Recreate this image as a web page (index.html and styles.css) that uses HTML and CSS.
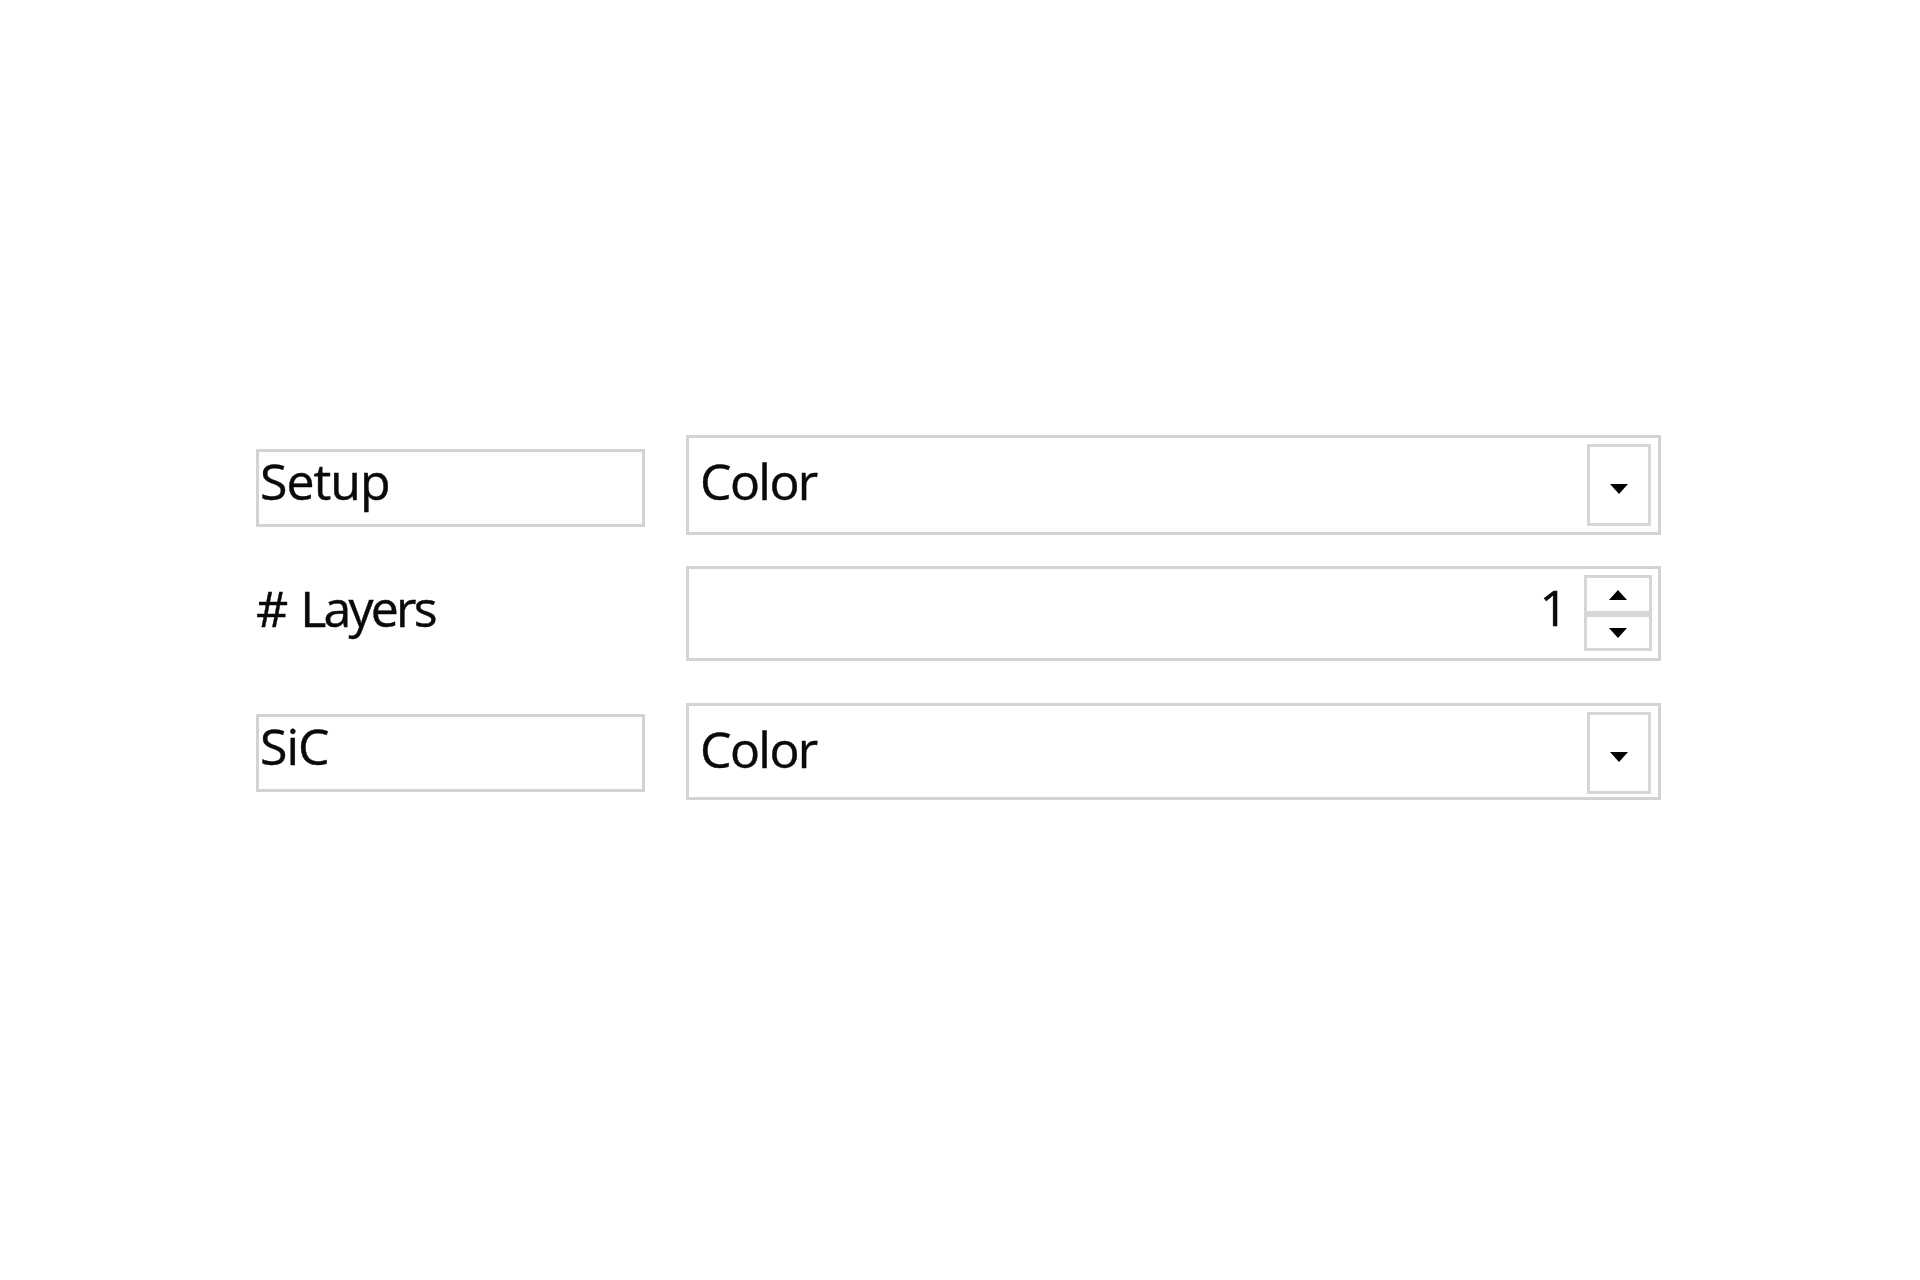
FILE: index.html
```html
<!DOCTYPE html>
<html lang="en">
<head>
<meta charset="utf-8">
<title>Layer setup</title>
<link rel="stylesheet" href="styles.css">
</head>
<body>
<div class="form">
  <div class="row row-setup">
    <div class="label-box">Setup</div>
    <div class="combo">
      <span class="combo-value">Color</span>
      <div class="drop-btn">
        <svg class="arrow" width="20" height="12" viewBox="0 0 20 12"><path d="M1 1H19L10 11Z" fill="#000"/></svg>
      </div>
    </div>
  </div>
  <div class="row row-layers">
    <div class="label"><span class="hash">#</span> <span class="word">Layers</span></div>
    <div class="spin">
      <span class="spin-value">1</span>
      <div class="spin-btns">
        <div class="spin-btn up">
          <svg class="arrow" width="20" height="12" viewBox="0 0 20 12"><path d="M1 11H19L10 1Z" fill="#000"/></svg>
        </div>
        <div class="spin-btn down">
          <svg class="arrow" width="20" height="12" viewBox="0 0 20 12"><path d="M1 1H19L10 11Z" fill="#000"/></svg>
        </div>
      </div>
    </div>
  </div>
  <div class="row row-sic">
    <div class="label-box">SiC</div>
    <div class="combo">
      <span class="combo-value">Color</span>
      <div class="drop-btn">
        <svg class="arrow" width="20" height="12" viewBox="0 0 20 12"><path d="M1 1H19L10 11Z" fill="#000"/></svg>
      </div>
    </div>
  </div>
</div>
</body>
</html>
```

FILE: styles.css
```css
html, body {
  margin: 0;
  padding: 0;
  background: #ffffff;
}

body {
  font-family: "Open Sans", "Noto Sans", "DejaVu Sans", sans-serif;
  font-size: 50px;
  color: #0a0a0a;
  -webkit-text-stroke: 0.4px #0a0a0a;
}

.form {
  padding: 435px 0 0 256px;
}

.row {
  display: grid;
  grid-template-columns: 389px 975px;
  column-gap: 41px;
  align-items: start;
}

.row-setup {
  height: 100px;
}

.row-layers {
  height: 95px;
  margin-top: 31px;
}

.row-sic {
  height: 97px;
  margin-top: 42px;
}

.label-box {
  box-sizing: border-box;
  height: 78px;
  border: 3px solid #d3d3d3;
  padding: 0 0 0 1px;
  line-height: 59px;
  white-space: nowrap;
  letter-spacing: -1px;
}

.row-setup .label-box {
  margin-top: 14px;
}

.row-sic .label-box {
  margin-top: 11px;
}

.label {
  line-height: 85px;
  white-space: nowrap;
}

.label .hash {
  letter-spacing: -1px;
}

.label .word {
  letter-spacing: -2.8px;
}

.combo,
.spin {
  box-sizing: border-box;
  height: 100%;
  border: 3px solid #d3d3d3;
  display: flex;
  justify-content: space-between;
  align-items: flex-start;
}

.combo {
  padding: 0 7px 0 11px;
}

.combo-value {
  line-height: 87px;
  letter-spacing: -1.6px;
}

.drop-btn {
  box-sizing: border-box;
  width: 64px;
  height: 82px;
  margin-top: 6px;
  border: 3px solid #d6d6d6;
  background: #ffffff;
  display: flex;
  align-items: center;
  justify-content: center;
}

.drop-btn .arrow {
  margin-top: 8px;
}

.spin {
  padding: 0 6px 0 12px;
  justify-content: flex-end;
  gap: 16px;
}

.spin-value {
  line-height: 77px;
}

.spin-btns {
  display: flex;
  flex-direction: column;
  margin-top: 6px;
  width: 68px;
}

.spin-btn {
  box-sizing: border-box;
  width: 68px;
  border: 3px solid #d6d6d6;
  display: flex;
  align-items: center;
  justify-content: center;
}

.spin-btn.up {
  height: 39px;
}

.spin-btn.down {
  height: 37px;
}

.arrow {
  display: block;
}
```
